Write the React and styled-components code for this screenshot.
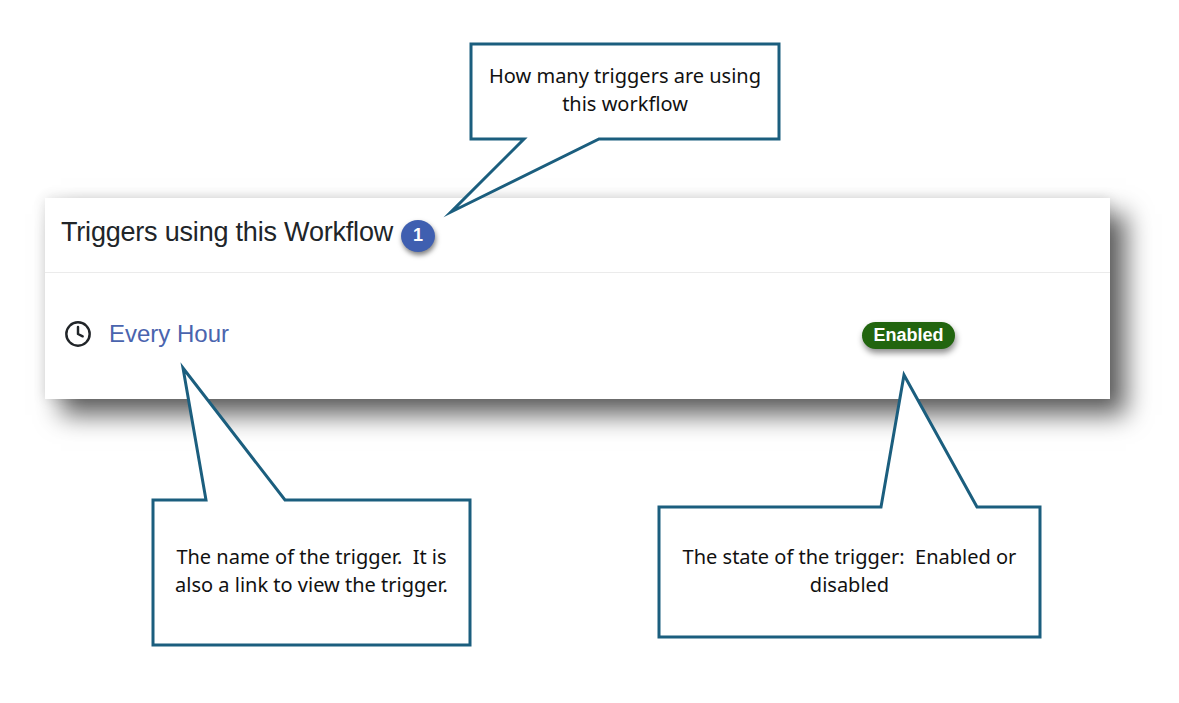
import React from "react";
import styled, { createGlobalStyle } from "styled-components";
import { Clock } from "lucide-react";

const GlobalStyle = createGlobalStyle`
  html, body {
    margin: 0;
    padding: 0;
    background: #fff;
  }
`;

const callouts = [
  {
    id: "count",
    left: 471,
    top: 44,
    width: 308,
    height: 95,
    paddingTop: 18,
    tail: "53,95 -20,168 128,95",
    text: "How many triggers are using this workflow",
  },
  {
    id: "name",
    left: 153,
    top: 500,
    width: 317,
    height: 145,
    paddingTop: 43,
    tail: "53,0 30,-132 132,0",
    text: "The name of the trigger.  It is also a link to view the trigger.",
  },
  {
    id: "state",
    left: 659,
    top: 507,
    width: 381,
    height: 130,
    paddingTop: 36,
    tail: "222,0 245,-132 318,0",
    text: "The state of the trigger:  Enabled or disabled",
  },
];

const outline = ({ width, height, tail }) => {
  const points = tail.split(" ");
  // tail sits on the top edge or the bottom edge of the box
  if (points[0].endsWith(",0")) {
    return `0,0 ${points.join(" ")} ${width},0 ${width},${height} 0,${height}`;
  }
  return `0,0 ${width},0 ${width},${height} ${[...points].reverse().join(" ")} 0,${height}`;
};

const App = () => {
  return (
    <Page>
      <GlobalStyle />
      <Card>
        <CardHeader>
          <Title>Triggers using this Workflow</Title>
          <CountBadge>1</CountBadge>
        </CardHeader>
        <TriggerRow>
          <TriggerName>
            <Clock size={28} strokeWidth={2.1} color="#212529" />
            <TriggerLink href="#">Every Hour</TriggerLink>
          </TriggerName>
          <StatusBadge>Enabled</StatusBadge>
        </TriggerRow>
      </Card>
      {callouts.map((c) => (
        <Callout
          key={c.id}
          $left={c.left}
          $top={c.top}
          $width={c.width}
          $height={c.height}
          $paddingTop={c.paddingTop}
        >
          <CalloutShape>
            <polygon
              points={outline(c)}
              fill="#fff"
              stroke="#1b5e7e"
              strokeWidth="3"
              strokeLinejoin="miter"
              strokeMiterlimit="10"
            />
          </CalloutShape>
          <CalloutText>{c.text}</CalloutText>
        </Callout>
      ))}
    </Page>
  );
};

const Page = styled.div`
  position: relative;
  width: 1179px;
  height: 703px;
  padding: 198px 0 0 45px;
  box-sizing: border-box;
  overflow: hidden;
  background: #fff;
`;

const Card = styled.div`
  width: 1065px;
  height: 201px;
  background: #fff;
  box-shadow: 16px 16px 24px rgba(0, 0, 0, 0.62), 0 0 12px rgba(0, 0, 0, 0.12);
  font-family: "Liberation Sans", Arial, sans-serif;
`;

const CardHeader = styled.div`
  display: flex;
  align-items: center;
  gap: 8px;
  height: 75px;
  padding: 0 0 6px 16px;
  box-sizing: border-box;
  border-bottom: 1px solid #ebebeb;
`;

const Title = styled.h2`
  margin: 0;
  font-size: 27px;
  font-weight: 400;
  line-height: 32px;
  letter-spacing: -0.2px;
  color: #212529;
`;

const CountBadge = styled.span`
  display: flex;
  align-items: center;
  justify-content: center;
  width: 34px;
  height: 32px;
  margin-top: 7px;
  border-radius: 50%;
  background: #3f5fb0;
  color: #fff;
  font-size: 18px;
  font-weight: 700;
  box-shadow: 1px 3px 5px rgba(0, 0, 0, 0.5);
`;

const TriggerRow = styled.div`
  display: grid;
  grid-template-columns: 817px auto;
  align-items: center;
  justify-content: start;
  height: 126px;
  padding-bottom: 1px;
  box-sizing: border-box;
`;

const TriggerName = styled.div`
  display: flex;
  align-items: center;
  gap: 17px;
  padding-left: 19px;
  margin-bottom: 3px;
`;

const TriggerLink = styled.a`
  font-size: 24px;
  line-height: 30px;
  color: #4a64ae;
  text-decoration: none;
`;

const StatusBadge = styled.span`
  display: flex;
  align-items: center;
  justify-content: center;
  width: 93px;
  height: 27px;
  border-radius: 14px;
  background: #22650f;
  color: #fff;
  font-size: 18px;
  font-weight: 700;
  box-shadow: 1px 4px 6px rgba(0, 0, 0, 0.45);
`;

const Callout = styled.div`
  position: absolute;
  left: ${(p) => p.$left}px;
  top: ${(p) => p.$top}px;
  width: ${(p) => p.$width}px;
  height: ${(p) => p.$height}px;
  padding: ${(p) => p.$paddingTop}px 10px 0;
  box-sizing: border-box;
`;

const CalloutShape = styled.svg`
  position: absolute;
  left: 0;
  top: 0;
  width: 100%;
  height: 100%;
  overflow: visible;
`;

const CalloutText = styled.p`
  position: relative;
  margin: 0;
  font-family: "Noto Sans", sans-serif;
  font-size: 20px;
  line-height: 28px;
  text-align: center;
  white-space: pre-wrap;
  color: #111;
`;

export default App;
